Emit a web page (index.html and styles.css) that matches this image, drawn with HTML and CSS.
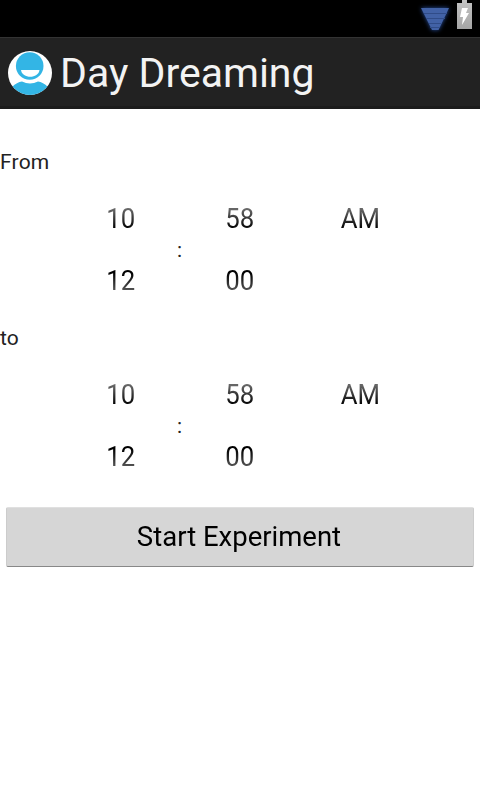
FILE: index.html
```html
<!DOCTYPE html>
<html lang="en">
<head>
<meta charset="utf-8">
<title>Day Dreaming</title>
<link rel="stylesheet" href="styles.css">
</head>
<body>
<div class="status">
  <svg class="wifi" width="34" height="30" viewBox="0 0 34 30"><path d="M3 4H31L20.500 26H14Z" fill="#4262a6"/><path d="M6 9.500H29M8 14.500H27M11 19.500H24M12 23.500H22" stroke="#304c88"/></svg>
  <svg class="battery" width="15" height="29" viewBox="0 0 15 29"><defs><linearGradient id="cell" x2="0" y2="1"><stop stop-color="#c4c4c4"/><stop offset="1" stop-color="#a5a5a5"/></linearGradient></defs><path d="M5 0H10V3H15V29H0V3H5Z" fill="url(#cell)"/><path d="M5 8H11L9 13H12L5 25L6 17H3Z" fill="#fff"/></svg>
</div>
<header class="bar">
  <svg class="logo" width="44" height="44" viewBox="0 0 44 44"><defs><clipPath id="disc"><circle cx="22" cy="22" r="22"/></clipPath></defs><circle cx="22" cy="22" r="22" fill="#fff"/><g clip-path="url(#disc)" fill="#33b5e5"><path d="M4 36Q9 31 14 30.500Q22 34.500 30 30.500Q35 31 40 36V44H4Z"/><circle cx="21.700" cy="15" r="13.800"/></g><path d="M13 19H31.500C30.500 28 14 28 13 19Z" fill="#fff"/></svg>
  <h1 class="title">Day Dreaming</h1>
</header>
<main>
  <div class="label">From</div>
  <div class="picker">
    <div class="col hour"><span class="up">10</span><span class="down">12</span></div>
    <span class="colon">:</span>
    <div class="col minute"><span class="up">58</span><span class="down">00</span></div>
    <div class="col ampm"><span class="up">AM</span></div>
  </div>
  <div class="label">to</div>
  <div class="picker">
    <div class="col hour"><span class="up">10</span><span class="down">12</span></div>
    <span class="colon">:</span>
    <div class="col minute"><span class="up">58</span><span class="down">00</span></div>
    <div class="col ampm"><span class="up">AM</span></div>
  </div>
  <button class="start"><span class="caption">Start Experiment</span></button>
</main>
</body>
</html>
```
FILE: styles.css
```css
* { box-sizing: border-box; }
body { margin: 0; height: 800px; overflow: hidden; background: #fff; color: #111; font-family: Roboto, sans-serif; }
.status { height: 37px; background: #000; display: flex; justify-content: flex-end; gap: 5px; padding: 0 8px 0 0; }
.wifi { margin-top: 4px; filter: drop-shadow(0 0 2px #28509f); }
.bar { height: 72px; background: #222; border-top: 1px solid #333; border-bottom: 3px solid #1c1c1c; display: flex; align-items: center; padding: 2px 0 0 8px; gap: 8px; }
.title { margin: 0; color: #f3f3f3; font-size: 41px; font-weight: 400; line-height: 48px; }
main { padding-top: 38px; }
.label { height: 30px; font-size: 21px; line-height: 30px; letter-spacing: .2px; color: #222; }
.picker { height: 146px; display: grid; grid-template-columns: 62px 117px 0 120px 120px; }
.col { display: flex; flex-direction: column; align-items: center; padding-top: 26px; font-size: 28px; line-height: 32px; gap: 30px; }
.col span { transform: scaleX(.92); color: transparent; background-clip: text; }
.hour { grid-column: 2; }
.minute { padding-left: 1px; }
.ampm { padding-left: 3px; }
.colon { grid-column: 3; width: 4px; margin-left: -2px; padding-top: 61px; font-size: 21px; line-height: 24px; color: #222; }
.col .up { background-image: linear-gradient(#666 20%, #000 80%); }
.col .down { background-image: linear-gradient(#000 25%, #555 80%); }
.start { display: block; width: 468px; height: 60px; margin: 8px 6px 0; padding: 0 2px 2px 0; border: 1px solid #ccc; border-top-color: #e0e0e0; border-bottom-color: #888; border-radius: 2px; background: #d6d6d6; font: 28px Roboto, sans-serif; color: #000; }
.caption { display: inline-block; transform: scaleX(.982); }
```
